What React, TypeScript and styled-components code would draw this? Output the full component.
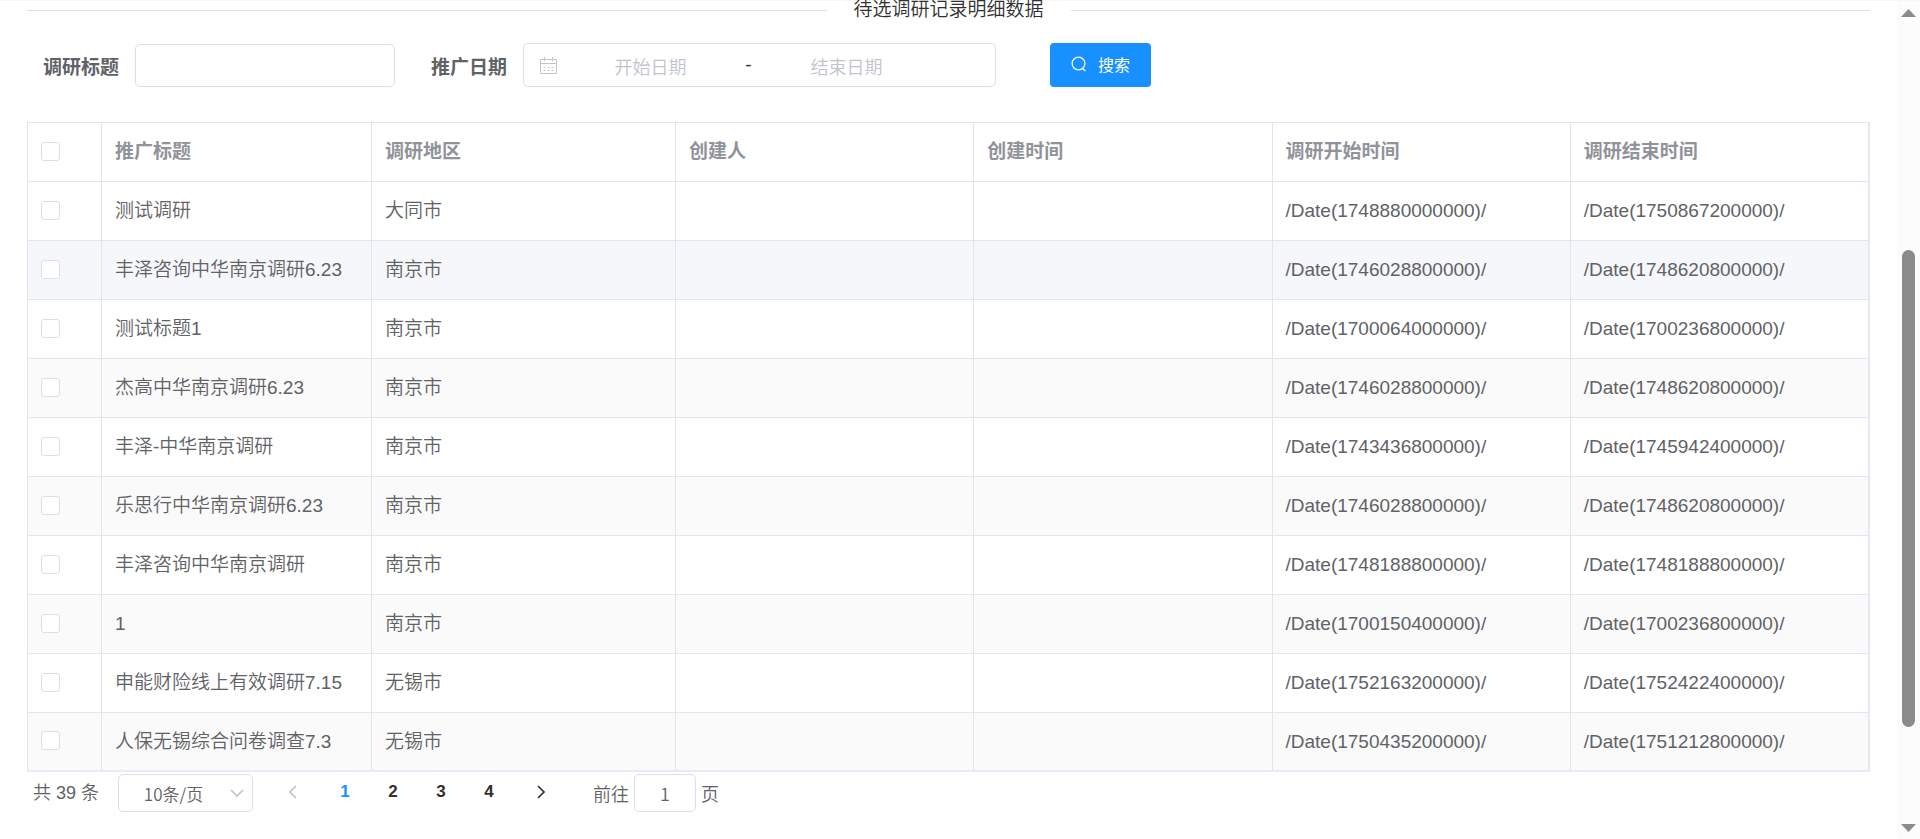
import React, { useState } from "react";
import styled, { createGlobalStyle } from "styled-components";

const GlobalStyle = createGlobalStyle`
  *, *::before, *::after { box-sizing: border-box; }
  body {
    margin: 0;
    background: #fff;
    color: #606266;
    font-family: "Liberation Sans", "Noto Sans CJK SC", sans-serif;
    font-size: 19px;
    font-weight: 350;
  }
  button, input, select { font-family: inherit; font-weight: inherit; }
`;

const Page = styled.div`
  display: flex;
  min-height: 100vh;
  border-top: 1px solid #fff4f2;
`;

const Content = styled.main`
  flex: 1;
  min-width: 0;
  padding: 0 27px;
`;

const Divider = styled.h2`
  display: flex;
  align-items: center;
  gap: 27px;
  margin: 0;
  height: 18px;
  color: #303133;
  font-size: 19px;
  font-weight: 350;
  line-height: 20px;
  white-space: nowrap;

  &::before, &::after {
    content: "";
    flex: 1;
    height: 1px;
    background: #dcdfe6;
  }
`;

const SearchForm = styled.form`
  display: flex;
  align-items: center;
  height: 44px;
  margin: 24px 0 35px;
  padding-left: 16px;
`;

const Field = styled.div<{ $after: number }>`
  display: flex;
  align-items: center;
  gap: 16px;
  margin-right: ${(p) => p.$after}px;
`;

const Label = styled.label`
  font-weight: 700;
  white-space: nowrap;
`;

const TextInput = styled.input<{ $width: number; $height: number }>`
  width: ${(p) => p.$width}px;
  height: ${(p) => p.$height}px;
  padding: 0 8px;
  border: 1px solid #dcdfe6;
  border-radius: 5px;
  background: #fff;
  color: #606266;
  font-family: "Noto Sans CJK SC", sans-serif;
  font-size: 18px;
  text-align: center;
  outline: none;
`;

const DateRange = styled.div`
  display: flex;
  align-items: center;
  width: 473px;
  height: 44px;
  padding: 0 15px;
  border: 1px solid #dcdfe6;
  border-radius: 5px;
  color: #303133;
`;

const DateInput = styled.input`
  width: 185px;
  height: 42px;
  padding: 2px 0 0;
  border: 0;
  background: none;
  color: #606266;
  font-family: "Noto Sans CJK SC", sans-serif;
  font-size: 18px;
  text-align: center;
  outline: none;

  &::placeholder { color: #c0c4cc; }
`;

const Dash = styled.span`
  width: 11px;
  text-align: center;
`;

const SearchButton = styled.button`
  display: flex;
  align-items: center;
  justify-content: center;
  gap: 11px;
  width: 101px;
  height: 44px;
  padding: 0 0 2px;
  border: 0;
  border-radius: 4px;
  background: #1890ff;
  color: #fff;
  font-size: 16px;
  font-weight: 400;
`;

const DataTable = styled.table`
  width: 100%;
  table-layout: fixed;
  border-collapse: separate;
  border-spacing: 0;
  border: 1px solid #dfe6ec;
  border-right-color: #e6ebf5;
  border-bottom-color: #e6ebf5;
`;

const Column = styled.col<{ $width?: number }>`
  width: ${(p) => (p.$width ? `${p.$width}px` : "auto")};
`;

const cell = `
  height: 59px;
  padding: 0 13px;
  border-right: 1px solid #dfe6ec;
  border-bottom: 1px solid #dfe6ec;
  text-align: left;
  white-space: nowrap;
  line-height: 28px;

  &:first-child { padding-bottom: 2px; }
`;

const HeadCell = styled.th`
  ${cell}
  color: #909399;
  font-weight: 700;
`;

const Cell = styled.td`${cell}`;

const Row = styled.tr<{ $tone: "plain" | "striped" | "active" }>`
  background: ${(p) => ({ plain: "#fff", striped: "#fafafa", active: "#f5f7fa" })[p.$tone]};

  &:last-child td {
    height: 58px;
    border-bottom-color: #e6ebf5;
  }
`;

const Checkbox = styled.input`
  appearance: none;
  display: block;
  width: 19px;
  height: 19px;
  margin: 0;
  border: 1px solid #dcdfe6;
  border-radius: 3px;
  background: #fff;

  &:checked { background: #1890ff; border-color: #1890ff; }
`;

const Pagination = styled.nav`
  display: flex;
  align-items: center;
  height: 38px;
  margin-top: 2px;
  padding-left: 6px;
  font-size: 18px;
  white-space: nowrap;
`;

const Total = styled.span`
  width: 85px;
  padding-bottom: 5px;
`;

const SizeBox = styled.div`
  display: grid;
  align-items: center;
  width: 135px;
  height: 38px;
  margin-right: 15px;

  > * { grid-area: 1 / 1; }
  > svg { justify-self: end; margin-right: 9px; pointer-events: none; }
`;

const SizeSelect = styled.select`
  appearance: none;
  width: 100%;
  height: 38px;
  padding: 0 48px 0 24px;
  border: 1px solid #dcdfe6;
  border-radius: 5px;
  background: #fff;
  color: #606266;
  font-family: "Noto Sans CJK SC", sans-serif;
  font-size: 17px;
  text-align: center;
  outline: none;
`;

const Pages = styled.div`
  display: flex;
  margin: 0 4px 0 5px;
`;

const PageButton = styled.button<{ $current?: boolean }>`
  display: flex;
  align-items: center;
  justify-content: center;
  width: 48px;
  height: 36px;
  padding: 0 0 2px;
  border: 0;
  background: none;
  color: ${(p) => (p.$current ? "#1890ff" : "#303133")};
  font-size: 17px;
  font-weight: 700;

  &:disabled { color: #c0c4cc; }
`;

const Jump = styled.label`
  display: flex;
  align-items: center;
  gap: 5px;
  margin-left: 28px;
`;

const ScrollTrack = styled.div`
  display: flex;
  flex-direction: column;
  align-items: center;
  width: 23px;
  padding: 8px 0 7px;
  background: #fcfcfc;
`;

const ScrollSpace = styled.div<{ $grow: number }>`
  flex: ${(p) => p.$grow} 0 0;
`;

const ScrollThumb = styled(ScrollSpace)`
  width: 13px;
  border-radius: 7px;
  background: #8b8b8b;
`;

const CalendarIcon = () => (
  <svg width="19" height="19" viewBox="0 0 19 19" fill="none" stroke="#c0c4cc" aria-hidden="true">
    <path d="M1.500 3.500h16v14h-16zM1.500 7.500h16M5.500 1v4M13.500 1v4" />
    <path d="M4.500 11.500h2M8.500 11.500h2M12.500 11.500h2M4.500 14.500h2M8.500 14.500h2M12.500 14.500h2" />
  </svg>
);

const SearchIcon = () => (
  <svg width="16" height="16" viewBox="0 0 16 16" fill="none" stroke="#fff" strokeWidth="1.200" aria-hidden="true">
    <circle cx="7.500" cy="7.500" r="6.400" />
    <path d="M11.500 12.500l3 2.500" />
  </svg>
);

const Chevron = ({ d, color, width = 9, height = 14 }: { d: string; color: string; width?: number; height?: number }) => (
  <svg width={width} height={height} viewBox={`0 0 ${width} ${height}`} fill="none" stroke={color} strokeWidth="1.700" aria-hidden="true">
    <path d={d} />
  </svg>
);

const ScrollArrow = ({ d }: { d: string }) => (
  <svg width="15" height="8" viewBox="0 0 15 8" fill="#8b8b8b" aria-hidden="true">
    <path d={d} />
  </svg>
);

const columns = ["推广标题", "调研地区", "创建人", "创建时间", "调研开始时间", "调研结束时间"];

const records = [
  ["测试调研", "大同市", 1748880000000, 1750867200000],
  ["丰泽咨询中华南京调研6.23", "南京市", 1746028800000, 1748620800000],
  ["测试标题1", "南京市", 1700064000000, 1700236800000],
  ["杰高中华南京调研6.23", "南京市", 1746028800000, 1748620800000],
  ["丰泽-中华南京调研", "南京市", 1743436800000, 1745942400000],
  ["乐思行中华南京调研6.23", "南京市", 1746028800000, 1748620800000],
  ["丰泽咨询中华南京调研", "南京市", 1748188800000, 1748188800000],
  ["1", "南京市", 1700150400000, 1700236800000],
  ["申能财险线上有效调研7.15", "无锡市", 1752163200000, 1752422400000],
  ["人保无锡综合问卷调查7.3", "无锡市", 1750435200000, 1751212800000],
] as const;

const activeRow = 1;

export default function App() {
  const [page, setPage] = useState(1);
  return (
    <>
      <GlobalStyle />
      <Page>
        <Content>
          <Divider>待选调研记录明细数据</Divider>
          <SearchForm onSubmit={(e) => e.preventDefault()}>
            <Field $after={36}>
              <Label htmlFor="title">调研标题</Label>
              <TextInput id="title" $width={260} $height={43} />
            </Field>
            <Field $after={54}>
              <Label htmlFor="start">推广日期</Label>
              <DateRange>
                <CalendarIcon />
                <DateInput id="start" placeholder="开始日期" />
                <Dash>-</Dash>
                <DateInput aria-label="结束日期" placeholder="结束日期" />
              </DateRange>
            </Field>
            <SearchButton type="submit">
              <SearchIcon />
              搜索
            </SearchButton>
          </SearchForm>

          <DataTable>
            <colgroup>
              <Column $width={74} />
              <Column $width={270} />
              <Column $width={304} />
              <Column />
              <Column />
              <Column />
              <Column />
            </colgroup>
            <thead>
              <tr>
                <HeadCell><Checkbox type="checkbox" aria-label="全选" /></HeadCell>
                {columns.map((c) => <HeadCell key={c} scope="col">{c}</HeadCell>)}
              </tr>
            </thead>
            <tbody>
              {records.map(([title, area, start, end], i) => (
                <Row key={title} $tone={i === activeRow ? "active" : i % 2 ? "striped" : "plain"}>
                  <Cell><Checkbox type="checkbox" aria-label={title} /></Cell>
                  <Cell>{title}</Cell>
                  <Cell>{area}</Cell>
                  <Cell />
                  <Cell />
                  <Cell>{`/Date(${start})/`}</Cell>
                  <Cell>{`/Date(${end})/`}</Cell>
                </Row>
              ))}
            </tbody>
          </DataTable>

          <Pagination aria-label="分页">
            <Total>共 39 条</Total>
            <SizeBox>
              <SizeSelect aria-label="每页条数" defaultValue="10">
                <option value="10">10条/页</option>
              </SizeSelect>
              <Chevron d="M1 1l6 6 6-6" color="#c0c4cc" width={14} height={9} />
            </SizeBox>
            <PageButton aria-label="上一页" disabled={page === 1} onClick={() => setPage(page - 1)}>
              <Chevron d="M8 1L2 7l6 6" color="currentColor" />
            </PageButton>
            <Pages>
              {[1, 2, 3, 4].map((n) => (
                <PageButton key={n} $current={n === page} onClick={() => setPage(n)}>{n}</PageButton>
              ))}
            </Pages>
            <PageButton aria-label="下一页" disabled={page === 4} onClick={() => setPage(page + 1)}>
              <Chevron d="M1 1l6 6-6 6" color="currentColor" />
            </PageButton>
            <Jump>
              前往
              <TextInput $width={62} $height={38} defaultValue="1" />
              页
            </Jump>
          </Pagination>
        </Content>
        <ScrollTrack>
          <ScrollArrow d="M7.500 0L15 8H0z" />
          <ScrollSpace $grow={233} />
          <ScrollThumb $grow={477} />
          <ScrollSpace $grow={97} />
          <ScrollArrow d="M0 0h15L7.500 8z" />
        </ScrollTrack>
      </Page>
    </>
  );
}
